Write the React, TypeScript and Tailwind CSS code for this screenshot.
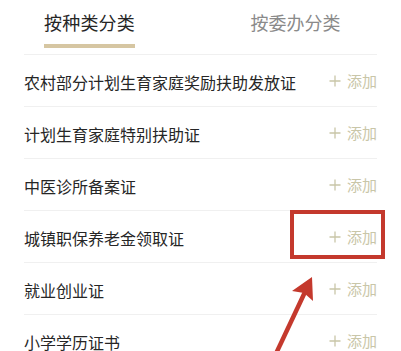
const items = [
  '农村部分计划生育家庭奖励扶助发放证',
  '计划生育家庭特别扶助证',
  '中医诊所备案证',
  '城镇职保养老金领取证',
  '就业创业证',
  '小学学历证书',
];

function AddButton() {
  return (
    <div className="flex items-center gap-[6px] text-[#c9c6a8]">
      <svg width="12" height="12" viewBox="0 0 12 12" className="shrink-0">
        <path d="M6 0.5V11.5M0.5 6H11.5" stroke="#c9c6a8" strokeWidth="1.3" fill="none" />
      </svg>
      <span className="text-[15px] leading-none">添加</span>
    </div>
  );
}

export default function App() {
  return (
    <div
      className="relative w-[401px] h-[351px] overflow-hidden bg-white"
      style={{ fontFamily: '"Noto Sans CJK SC", "Noto Sans", sans-serif' }}
    >
      {/* tabs */}
      <div className="mx-[24px] h-[55px] border-b border-[#f0f0f0] flex pl-[20px]">
        <div className="flex flex-col items-center w-[91px]">
          <span className="mt-[10px] text-[18px] leading-[24px] text-[#262626] tracking-[0.2px]">按种类分类</span>
          <span className="mt-[10px] h-[4px] w-[91px] bg-[#d6c6a2]" />
        </div>
        <div className="ml-[115px] flex flex-col items-center w-[91px]">
          <span className="mt-[10px] text-[18px] leading-[24px] text-[#8a8a8a]">按委办分类</span>
        </div>
      </div>

      {/* list */}
      <div className="mx-[24px] flex flex-col">
        {items.map((label) => (
          <div
            key={label}
            className="h-[52px] shrink-0 flex items-center justify-between border-b border-[#f0f0f0]"
          >
            <span className="text-[16px] text-[#262626] leading-none pt-[2px]">{label}</span>
            <AddButton />
          </div>
        ))}
      </div>

      {/* annotation box */}
      <div className="absolute left-[290px] top-[210px] w-[95px] h-[49px] border-[4px] border-[#c4392d]" />

      {/* annotation arrow */}
      <svg className="absolute left-0 top-0" width="401" height="351" viewBox="0 0 401 351">
        <path d="M273 360 L305 292" stroke="#c4392d" strokeWidth="4.5" fill="none" />
        <polygon points="312,277 292,291 304,293 313,301" fill="#c4392d" />
      </svg>
    </div>
  );
}
